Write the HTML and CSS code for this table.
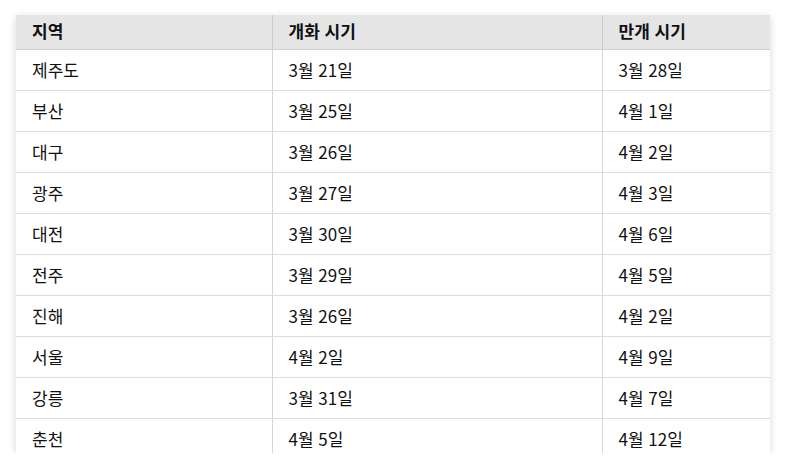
FILE: index.html
```html
<!DOCTYPE html>
<html lang="ko">
<head>
<meta charset="utf-8">
<link rel="stylesheet" href="styles.css">
</head>
<body>
<div class="wrap">
<table class="bloom">
<colgroup><col class="c1"><col class="c2"><col class="c3"></colgroup>
<thead>
<tr><th>지역</th><th>개화 시기</th><th>만개 시기</th></tr>
</thead>
<tbody>
<tr><td>제주도</td><td>3월 21일</td><td>3월 28일</td></tr>
<tr><td>부산</td><td>3월 25일</td><td>4월 1일</td></tr>
<tr><td>대구</td><td>3월 26일</td><td>4월 2일</td></tr>
<tr><td>광주</td><td>3월 27일</td><td>4월 3일</td></tr>
<tr><td>대전</td><td>3월 30일</td><td>4월 6일</td></tr>
<tr><td>전주</td><td>3월 29일</td><td>4월 5일</td></tr>
<tr><td>진해</td><td>3월 26일</td><td>4월 2일</td></tr>
<tr><td>서울</td><td>4월 2일</td><td>4월 9일</td></tr>
<tr><td>강릉</td><td>3월 31일</td><td>4월 7일</td></tr>
<tr><td>춘천</td><td>4월 5일</td><td>4월 12일</td></tr>
</tbody>
</table>
</div>
</body>
</html>
```
FILE: styles.css
```css
html, body {
  margin: 0;
  padding: 0;
  background: #ffffff;
}
body {
  padding: 15px 15px 0 16px;
  font-family: "Noto Sans CJK KR", "Noto Sans", sans-serif;
  color: #111111;
}
.wrap {
  width: 754px;
  height: 438px;
  overflow: hidden;
  box-shadow: 0 2px 8px rgba(0, 0, 0, 0.16);
  background: #ffffff;
}
.bloom {
  width: 754px;
  border-collapse: collapse;
  table-layout: fixed;
  font-size: 17px;
}
.c1 { width: 256px; }
.c2 { width: 330px; }
.c3 { width: 168px; }
.bloom th, .bloom td {
  text-align: left;
  padding: 0 16px;
  line-height: 20px;
  border-right: 1px solid #d6d6d6;
  border-bottom: 1px solid #dcdcdc;
}
.bloom th:last-child, .bloom td:last-child {
  border-right: none;
}
.bloom th {
  height: 31px;
  padding-bottom: 3px;
  background: #e5e5e5;
  font-weight: 700;
  border-bottom: 1px solid #cfcfcf;
  border-right-color: #cccccc;
}
.bloom td {
  height: 40px;
  font-weight: 400;
}
```
